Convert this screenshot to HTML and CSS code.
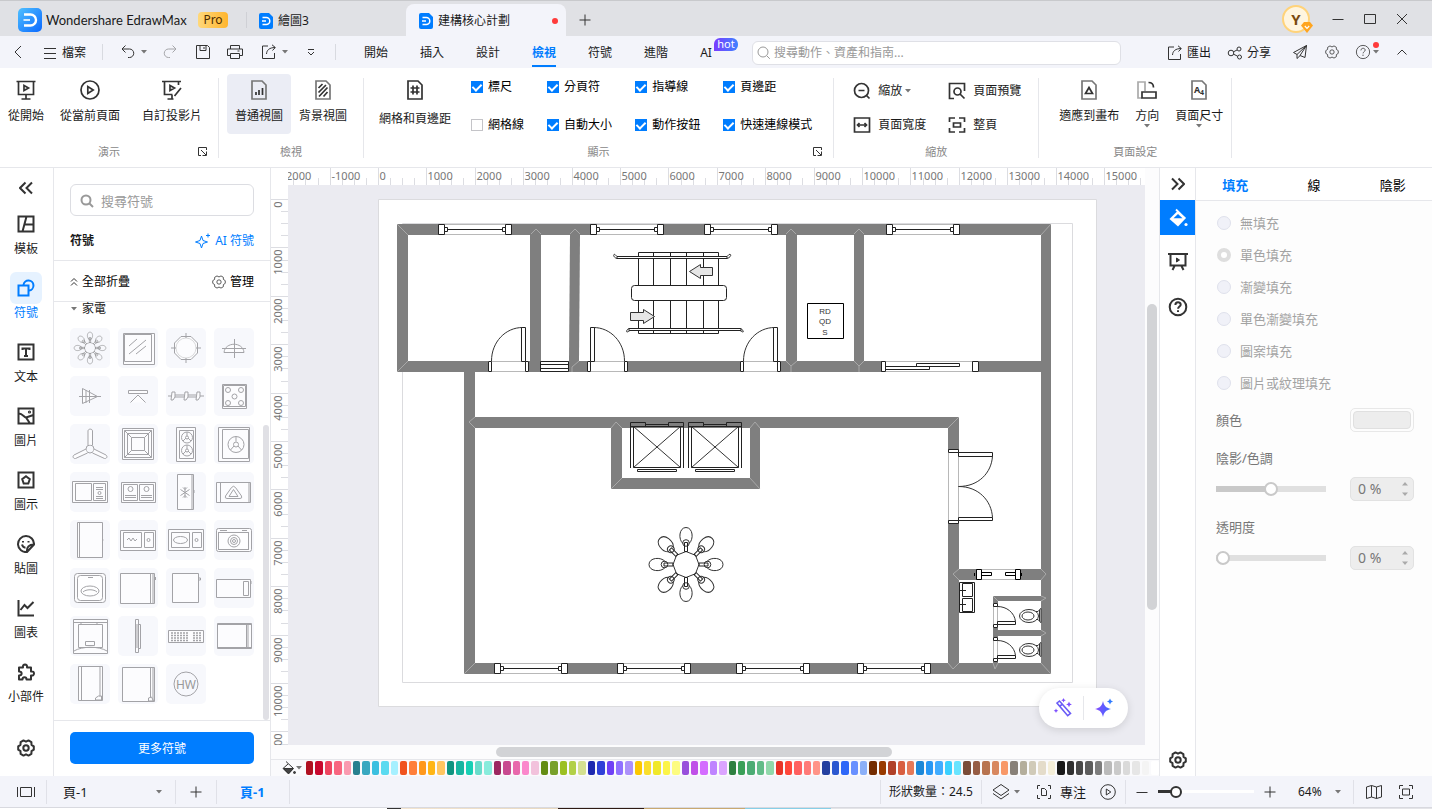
FILE: index.html
```html
<!DOCTYPE html>
<html lang="zh-Hant">
<head>
  <meta charset="UTF-8">
  <meta name="viewport" content="width=device-width, initial-scale=1.0">
  <title>Wondershare EdrawMax</title>
  <link rel="stylesheet" href="styles.css">
</head>
<body>

  <!-- shared icons -->
  <svg class="defs" width="0" height="0" aria-hidden="true">
    <symbol id="i-gear" viewBox="0 0 20 20">
      <path d="M17.8 8.3v3.4l-2.3 1.5-.1 2.7-2.9 1.7-2.5-1.3-2.5 1.3-2.9-1.7-.1-2.7-2.3-1.5V8.3l2.3-1.5.1-2.7 2.9-1.7L10 3.7l2.5-1.3 2.9 1.7.1 2.7z" stroke-linejoin="round"/>
      <circle cx="10" cy="10" r="2.7"/>
    </symbol>
    <symbol id="i-doc" viewBox="0 0 14 16">
      <path d="M2 0h8l4 4v10a2 2 0 0 1-2 2H2a2 2 0 0 1-2-2V2a2 2 0 0 1 2-2z" fill="#007dff" stroke="none"/>
      <path d="M3.5 4.5h3.8a3.5 3.5 0 0 1 0 7H3.5M3 8h4" fill="none" stroke="#fff" stroke-width="1.5"/>
    </symbol>
    <symbol id="i-caret" viewBox="0 0 6 4"><path d="M0 0h6L3 3.6z" fill="#777" stroke="none"/></symbol>
    <symbol id="i-export" viewBox="0 0 16 16">
      <path d="M7 2H1.500v12.500h12V9"/><path d="M5.500 10c.3-4 2.800-6.300 8.500-6.500M11 .8l3.300 2.700L11.500 6.500"/>
    </symbol>
    <symbol id="i-launch" viewBox="0 0 9 9"><path d="M3 8.500H.5v-8h8V3M3 3l5 5M8.500 4.500v4h-4"/></symbol>
    <symbol id="i-help" viewBox="0 0 20 20">
      <circle cx="10" cy="10" r="8.300"/><path d="M7.400 8c0-3.500 5.300-3.500 5.300-.3 0 1.800-2.600 2-2.600 4M10 13.300v1.700"/>
    </symbol>
  </svg>

  <header class="titlebar">
    <div class="brand">
      <svg class="logo" viewBox="0 0 24 24">
        <defs><linearGradient id="lg" x1="0" y1="0" x2="1" y2="1"><stop offset="0" stop-color="#4fc0ff"/><stop offset="1" stop-color="#0a68ff"/></linearGradient></defs>
        <rect width="24" height="24" rx="5" fill="url(#lg)"/>
        <path d="M6 6.500h6.500a5.500 5.500 0 0 1 0 11H6" fill="none" stroke="#fff" stroke-width="2.400"/>
        <path d="M5.500 12H12" stroke="#cfe9ff" stroke-width="2"/>
      </svg>
      <span class="brand-name">Wondershare EdrawMax</span>
      <span class="pro">Pro</span>
    </div>
    <nav class="doc-tabs">
      <a class="doc-tab" href="#"><svg class="doc-icon"><use href="#i-doc"/></svg>繪圖3</a>
      <a class="doc-tab active" href="#"><svg class="doc-icon"><use href="#i-doc"/></svg>建構核心計劃<i class="dot"></i></a>
      <button class="icon-btn" aria-label="新增"><svg viewBox="0 0 12 12" class="s12"><path d="M6 .5v11M.5 6h11"/></svg></button>
    </nav>
    <div class="win-btns">
      <span class="avatar">Y
        <svg class="gem" viewBox="0 0 12 11"><path d="M3 0h6l3 3.500L6 11 0 3.500z" fill="#ffa51f"/><path d="M3.800 4 6 6.300 8.200 4" fill="none" stroke="#fff" stroke-width="1.200"/></svg>
      </span>
      <button class="icon-btn" aria-label="最小化"><svg viewBox="0 0 12 12" class="s12"><path d="M.5 6.500h11"/></svg></button>
      <button class="icon-btn" aria-label="最大化"><svg viewBox="0 0 12 12" class="s12"><path d="M.5 1.500h11v9H.5z"/></svg></button>
      <button class="icon-btn" aria-label="關閉"><svg viewBox="0 0 12 12" class="s12"><path d="m1 1 10 10M11 1 1 11"/></svg></button>
    </div>
  </header>

  <div class="menubar">
    <button class="icon-btn back" aria-label="返回"><svg viewBox="0 0 8 14" class="s14"><path d="M7 1 1 7l6 6"/></svg></button>
    <button class="file-btn"><svg viewBox="0 0 12 12" class="s12"><path d="M0 1.500h12M0 6.500h12M0 11.500h12"/></svg>檔案</button>
    <i class="vsep"></i>
    <div class="quick">
      <button class="icon-btn" aria-label="復原"><svg viewBox="0 0 16 16" class="s16"><path d="M5.500 1.500 2 5l3.500 3.500M2 5h7.500a4 4 0 0 1 0 8.500H8"/></svg><svg class="caret"><use href="#i-caret"/></svg></button>
      <button class="icon-btn faded" aria-label="重做"><svg viewBox="0 0 16 16" class="s16"><path d="M10.500 1.500 14 5l-3.500 3.500M14 5H6.500a4 4 0 0 0 0 8.500H8"/></svg></button>
      <button class="icon-btn" aria-label="儲存"><svg viewBox="0 0 16 16" class="s16"><path d="M1.500 1.500h11l2 2v11h-13zM5 1.500v5h6v-5M9 3v2"/></svg></button>
      <button class="icon-btn" aria-label="列印"><svg viewBox="0 0 16 16" class="s16"><path d="M3.500 5V1.500h9V5M3.500 11.500h-3V5h15v6.500h-3M3.500 9.500h9v5h-9zM10.500 7h2"/></svg></button>
      <button class="icon-btn" aria-label="匯出檔案"><svg class="s16"><use href="#i-export"/></svg><svg class="caret"><use href="#i-caret"/></svg></button>
      <button class="icon-btn" aria-label="更多"><svg viewBox="0 0 8 8" class="s8"><path d="M1 1.500h6M1 4l3 3 3-3"/></svg></button>
    </div>
    <i class="vsep"></i>
    <nav class="tabs">
      <a href="#">開始</a><a href="#">插入</a><a href="#">設計</a><a href="#" class="active">檢視</a><a href="#">符號</a><a href="#">進階</a><a href="#" class="ai">AI<b class="hot">hot</b></a>
    </nav>
    <label class="top-search">
      <svg viewBox="0 0 14 14" class="s14"><circle cx="6" cy="6" r="5"/><path d="m9.800 9.800 3 3"/></svg>
      <input type="text" placeholder="搜尋動作、資產和指南..." aria-label="搜尋動作">
    </label>
    <div class="actions">
      <button class="text-btn"><svg class="s16"><use href="#i-export"/></svg>匯出</button>
      <button class="text-btn"><svg viewBox="0 0 16 16" class="s16"><circle cx="4" cy="8" r="2.800"/><circle cx="12" cy="4" r="2"/><circle cx="12.500" cy="12" r="2"/><path d="M6.500 6.800 10 5M6.600 9.200l4 2"/></svg>分享</button>
      <button class="icon-btn" aria-label="傳送"><svg viewBox="0 0 16 16" class="s16"><path d="M14.500 1.500 1.500 8.500 5 10.500M14.500 1.500 5 10.500v4l3-2.800M14.500 1.500l-1.500 12-5-2z"/></svg></button>
      <button class="icon-btn" aria-label="設定"><svg class="s16"><use href="#i-gear"/></svg></button>
      <button class="icon-btn help" aria-label="說明"><svg class="s16"><use href="#i-help"/></svg><svg class="caret"><use href="#i-caret"/></svg></button>
      <button class="icon-btn" aria-label="收起"><svg viewBox="0 0 10 6" class="s10"><path d="m.5 5.500 4.500-4.500 4.500 4.500"/></svg></button>
    </div>
  </div>

  <section class="ribbon">
    <div class="group g-show">
      <div class="group-body">
        <button class="big"><svg viewBox="0 0 20 20"><path d="M.5 1.500h19M2.500 2v12.500h15V2M10 15v4M5.500 19h9M8 5.500v5l4.500-2.500z"/></svg>從開始</button>
        <button class="big"><svg viewBox="0 0 20 20"><circle cx="10" cy="10" r="9"/><path d="M7.800 6.500v7l5.400-3.500z"/></svg>從當前頁面</button>
        <button class="big custom"><svg viewBox="0 0 20 20"><path d="M0 1.500h19M2.500 2v12.500h8M10 15v4M5.500 19h6M8 5.500v5l4.500-2.500zM16.500 2v3M12.500 16l6.500-8"/></svg>自訂投影片</button>
      </div>
      <div class="group-name">演示</div>
      <svg class="launch"><use href="#i-launch"/></svg>
    </div>
    <i class="gsep"></i>
    <div class="group g-view">
      <div class="group-body">
        <button class="big active"><svg viewBox="0 0 20 20"><path class="soft" d="M3 1h10l4 4v14H3z"/><path d="M7 15v-3M10 15v-5M13.500 15V8"/></svg>普通視圖</button>
        <button class="big"><svg viewBox="0 0 20 20"><path class="soft" d="M3 1h10l4 4v14H3z"/><path d="m5.500 8 4-4M5.500 12.500 13 5M6 16.500l8.500-9M10.500 16.500l4-4.500"/></svg>背景視圖</button>
      </div>
      <div class="group-name">檢視</div>
    </div>
    <i class="gsep"></i>
    <div class="group g-display">
      <div class="group-body">
        <button class="big tall"><svg viewBox="0 0 20 20"><path d="M3 1h10l4 4v14H3zM8 5.500v9M12 5.500v9M5.500 8h9M5.500 12h9"/></svg>網格和頁邊距</button>
        <div class="checks">
          <label><input type="checkbox" checked>標尺</label>
          <label><input type="checkbox" checked>分頁符</label>
          <label><input type="checkbox" checked>指導線</label>
          <label><input type="checkbox" checked>頁邊距</label>
          <label><input type="checkbox">網格線</label>
          <label><input type="checkbox" checked>自動大小</label>
          <label><input type="checkbox" checked>動作按鈕</label>
          <label><input type="checkbox" checked>快速連線模式</label>
        </div>
      </div>
      <div class="group-name">顯示</div>
      <svg class="launch"><use href="#i-launch"/></svg>
    </div>
    <i class="gsep"></i>
    <div class="group g-zoom">
      <div class="zoom-grid">
        <button><svg viewBox="0 0 18 18"><circle cx="8.500" cy="8.500" r="7"/><path d="M5.500 8.500h6M13.500 13.500l3 3"/></svg>縮放<svg class="caret"><use href="#i-caret"/></svg></button>
        <button><svg viewBox="0 0 18 18"><path d="M16.500 9V1.500h-15v15H6"/><circle cx="9.500" cy="9.500" r="3.500"/><path d="m12 12 4.500 4.500"/></svg>頁面預覽</button>
        <button><svg viewBox="0 0 18 18"><path d="M1.500 2h15v14h-15zM4.500 9h9M6.500 7l-2 2 2 2M11.500 7l2 2-2 2"/></svg>頁面寬度</button>
        <button><svg viewBox="0 0 18 18"><path d="M1.500 6V2H7M11 2h5.500v4M16.500 12v4H11M7 16H1.500v-4M5.500 7h7v4h-7z"/></svg>整頁</button>
      </div>
      <div class="group-name">縮放</div>
    </div>
    <i class="gsep"></i>
    <div class="group g-page">
      <div class="group-body">
        <button class="big"><svg viewBox="0 0 20 20"><path class="soft" d="M3 1h10l4 4v14H3z"/><path d="m10 7.500 3.500 6h-7z"/></svg>適應到畫布</button>
        <button class="big"><svg viewBox="0 0 20 20"><path class="pale" d="M5 18H1V2h7v9"/><path d="M5 12h14v6H5zM11.500 2.500c3 0 5 2 5 5"/></svg>方向<svg class="caret"><use href="#i-caret"/></svg></button>
        <button class="big"><svg viewBox="0 0 20 20"><path class="soft" d="M3 1h10l4 4v14H3z"/><text x="5" y="13" class="a4">A</text><text x="11" y="15" class="a4 sub">4</text></svg>頁面尺寸<svg class="caret"><use href="#i-caret"/></svg></button>
      </div>
      <div class="group-name">頁面設定</div>
    </div>
    <i class="gsep"></i>
  </section>

  <main class="work">
    <nav class="rail">
      <button class="collapse" aria-label="收合"><svg viewBox="0 0 14 14" class="s14 thick"><path d="M6.500 1.500 1 7l5.500 5.500M13 1.500 7.500 7l5.500 5.500"/></svg></button>
      <a href="#"><span><svg viewBox="0 0 18 18"><path d="M1.500 1.500h15v15h-15zM9.500 1.500l-4 15M8 9.500h8.500"/></svg></span>模板</a>
      <a href="#" class="active"><span><svg viewBox="0 0 18 18"><path d="M1.500 6.500h10v10h-10z"/><path d="M6.500 6a5 5 0 1 1 5.500 5.500"/></svg></span>符號</a>
      <a href="#"><span><svg viewBox="0 0 18 18"><path d="M1.500 1.500h15v15h-15zM5.500 7V5.500h7V7M9 5.500v7.500M7 13h4"/></svg></span>文本</a>
      <a href="#"><span><svg viewBox="0 0 18 18"><path d="M1.500 1.500h15v15h-15zM1.500 6.500C5 6 7 10 9 10.500l4 6M9 10.500l7.500-2.500"/><circle cx="12.500" cy="5" r=".6"/></svg></span>圖片</a>
      <a href="#"><span><svg viewBox="0 0 18 18"><path d="M1.500 1.500h15v15h-15zM9 5.200l3.800 2.900-1.500 4.400H6.700L5.200 8.100z"/></svg></span>圖示</a>
      <a href="#"><span><svg viewBox="0 0 18 18"><path d="M10 17A8 8 0 1 1 17 9.500zM10 17c-.5-5 2-7.500 7-7.500M5 9.500c.5 2 1.500 3 3.500 3.200"/><path d="M6 6v1.500M11.500 6v1.500"/></svg></span>貼圖</a>
      <a href="#"><span><svg viewBox="0 0 18 18"><path d="M1.500 1v15.500H17M3.500 11l4-5 3 3 6-6"/></svg></span>圖表</a>
      <a href="#"><span><svg viewBox="0 0 18 18"><path d="M2 4.500h4c-1-4 5-4 4 0h4v4c4-1 4 5 0 4v4H9.500c0-3-4-3-4 0H2v-4c3.500 0 3.500-4 0-4z" stroke-linejoin="round"/></svg></span>小部件</a>
      <button class="rail-gear" aria-label="設定"><svg><use href="#i-gear"/></svg></button>
    </nav>

    <aside class="library">
      <div class="lib-top">
        <label class="lib-search">
          <svg viewBox="0 0 14 14" class="s14"><circle cx="6" cy="6" r="4.500"/><path d="m9.500 9.500 3.500 3.500"/></svg>
          <input type="text" placeholder="搜尋符號" aria-label="搜尋符號">
        </label>
        <div class="lib-row"><b>符號</b><a href="#" class="ai-link"><svg viewBox="0 0 16 16" class="s16"><path d="M6.500 3 8 7.500l4.500 1.500L8 10.500 6.500 15 5 10.500.5 9 5 7.500zM13 .5v4M11 2.500h4"/></svg>AI 符號</a></div>
      </div>
      <div class="lib-tools">
        <button><svg viewBox="0 0 8 10" class="s10"><path d="m1 4.500 3-3 3 3M1 8.500l3-3 3 3"/></svg>全部折疊</button>
        <button><svg class="s16"><use href="#i-gear"/></svg>管理</button>
      </div>
      <div class="lib-scroll">
        <button class="cat"><svg class="caret"><use href="#i-caret"/></svg>家電</button>
        <div class="shapes">
          <button><svg class="light"><use href="#lamp" transform="translate(20 20) scale(.43)"/></svg></button>
          <button><svg><path d="M5.500 5.500h31v31h-31zM6.500 6.500h27v27h-27zM11 18l8-7M11 26l17-14M18 26l10-8"/></svg></button>
          <button><svg><circle cx="20" cy="20" r="10"/><path d="M20 5v5M20 30v5M5 20h5M30 20h5M15 8.500h10l6.500 6.500v10L25 31.500H15L8.500 25V15z"/></svg></button>
          <button><svg><path d="M8 20.500h24M20.500 11v19M10 24.500h20c-1-11-19-11-20 0z"/></svg></button>
          <button><svg><path d="M9 20.500h22M12.500 12.500v15l15-7zM16 14v13M19.500 14v13"/></svg></button>
          <button><svg><path d="M10.500 14.500h19v3h-19zM12.500 26.500 20 19l7.500 7.500"/></svg></button>
          <button><svg><path d="M2 20h3M9 19h9M9 21h9M22 19h8M22 21h8M34 20h4M6 16h3v5l-2 3H5zM19 16h3v5l-2 3h-2zM31 16h3v5l-2 3h-2z"/></svg></button>
          <button><svg><path d="M8.500 8.500h24v24h-24zM9.500 9.500h22v21h-22z"/><circle cx="14" cy="14" r="2.500"/><circle cx="27" cy="14" r="2.500"/><circle cx="20.500" cy="20.500" r="2.500"/><circle cx="14" cy="27" r="2.500"/><circle cx="27" cy="27" r="2.500"/></svg></button>
          <button><svg><circle cx="20" cy="25" r="4"/><path d="M18 21V7c0-2.500 4.500-2.500 4.500 0v14M16 25 4 31c-2 1.500-.5 4 1.500 3.500L17.500 29M24 25l12 6c2 1.500.5 4-1.500 3.500L22.500 29"/></svg></button>
          <button><svg><path d="M4.500 4.500h31v31h-31zM6.500 6.500h27v27h-27zM9.500 9.500h21v21h-21zM13.500 13.500h13v13h-13zM6.500 6.500l7 7M33.500 6.500l-7 7M6.500 33.500l7-7M33.500 33.500l-7-7"/></svg></button>
          <button><svg><path d="M10.500 3.500h19v34h-19zM13.500 6.500h14v28h-14z"/><circle cx="21" cy="13.500" r="5.500"/><circle cx="21" cy="26.500" r="5.500"/><circle cx="21" cy="13.500" r="1.500"/><circle cx="21" cy="26.500" r="1.500"/><path d="M21 8v4M17 17l3-3M25 17l-3-3M21 21v4M17 30l3-3M25 30l-3-3"/></svg></button>
          <button><svg><path d="M4.500 3.500h31v34h-31zM8.500 5.500h26v29h-26z"/><circle cx="22" cy="20.500" r="8"/><circle cx="22" cy="20.500" r="2.500"/><path d="M22 12.500v5M16.500 26l3.500-4M27.500 26 24 22"/></svg></button>
          <button><svg><path d="M2.500 9.500h35v21h-35zM5.500 11.500h16v17h-16zM23.500 11.500h12v17h-12zM26 15.500h7M26 17.500h7M26 24.500h7M26 26.500h7"/><circle cx="29.500" cy="21" r="1.500"/></svg></button>
          <button><svg><path d="M3.500 10.500h34v20h-34zM5.500 12.500h14v16h-14zM21.500 12.500h14v16h-14zM7 23.500h11M7 25.500h11M23 23.500h11M23 25.500h11"/><circle cx="12.500" cy="17" r="2.500"/><circle cx="28.500" cy="17" r="2.500"/></svg></button>
          <button><svg><path d="M11.500 2.500h16v35h-16zM26 2.500v35M28 18v3M19 15v11M14.500 17.500l9 6M23.500 17.500l-9 6M17 15.500l2 2 2-2M17 25.500l2-2 2 2"/></svg></button>
          <button><svg><path d="M2.500 10.500h34v20h-34zM6.500 10.500v20M35 11v19M17.500 15.500q2-2.500 4 0l6 8.500q1 2.500-1.500 2.500H13q-2.500 0-1.500-2.500zM19.500 17.500l-4.500 7h9z"/></svg></button>
          <button><svg><path d="M7.500 2.500h25v35h-25zM9.500 2.500v35M32.500 20h1"/></svg></button>
          <button><svg><path d="M2.500 10.500h35v20h-35zM5.500 12.500h18v15h-18zM26.500 12.500h9v15h-9zM9 20l2-2 2 3 2-3 2 3 2-2"/><circle cx="30.500" cy="20" r="1.500"/></svg></button>
          <button><svg><path d="M2.500 9.500h35v21h-35zM5.500 12.500h18v15h-18zM26.500 12.500h9v15h-9z"/><ellipse cx="14.500" cy="20" rx="7" ry="3.500"/><circle cx="30.500" cy="20" r="1.500"/></svg></button>
          <button><svg><rect x="2.500" y="8.500" width="35" height="23" rx="2"/><rect x="4.500" y="12.500" width="30" height="17"/><circle cx="20" cy="21" r="6"/><circle cx="20" cy="21" r="3.500"/><circle cx="20" cy="21" r="1.500"/><path d="M6 10.500h7M28 10.500h5"/></svg></button>
          <button><svg><rect x="4.500" y="5.500" width="31" height="29" rx="3"/><rect x="7.500" y="7.500" width="25" height="25" rx="3"/><ellipse cx="20" cy="23" rx="9" ry="5"/><path d="M18 9.500h5M13 24c3-3 11-3 14 0"/></svg></button>
          <button><svg><path d="M2.500 5.500h34v30h-34zM32.500 5.500v30M35 6v29M37.500 9v3"/></svg></button>
          <button><svg><path d="M6.500 5.500h26v29h-26zM33 10h1.500v2H33"/></svg></button>
          <button><svg><path d="M2.500 11.500h34v18h-34zM29.500 13.500h5v14h-5zM37 13v3"/></svg></button>
          <button><svg><path d="M3.500 3.500h34v34h-34zM3.500 6.500h34M8.500 8.500h24v23h-24zM15.500 25.500h9v4h-9zM4 35c8-5 25-5 33 0M11 6.500v2M27 6.500v2"/></svg></button>
          <button><svg><path d="M17.500 3.500h3v33h-3zM20.500 8.500h2v24h-2zM19 8v24"/></svg></button>
          <button><svg><path d="M2.500 14.500h35v12h-35z"/><path d="M5 17h17M5 19.500h17M5 22h17M5 24.500h17M27 17h8M27 19.500h8M27 22h8M27 24.500h8" stroke-dasharray="2 1" stroke-width="1.500"/></svg></button>
          <button><svg><path d="M3.500 7.500h34v25h-34zM32.500 7.500v25M34 8v24M3 8.500h35M3 31.500h35"/></svg></button>
          <button><svg><path d="M8.500 2.500h24v34h-24zM11.500 2.500v34M30 2.500v30M25.500 36v-2l3-2h3v4z"/></svg></button>
          <button><svg><path d="M4.500 3.500h32v34h-32zM32.500 3.500v30M35 4v33M30.500 37v-3l3-1 2 4z"/></svg></button>
          <button><svg><circle cx="20" cy="20" r="12"/><text x="20" y="25" class="hw">HW</text></svg></button>
        </div>
        <i class="lib-thumb"></i>
      </div>
      <div class="lib-foot"><button>更多符號</button></div>
    </aside>

    <section class="stage">
      <svg class="ruler-h" id="rulerH"></svg>
      <svg class="ruler-v" id="rulerV"></svg>
      <div class="canvas">
        <svg class="plan" viewBox="288 185 857 560" preserveAspectRatio="xMinYMin meet">
          <defs>
            <g id="win">
              <path class="gap" d="M3 0h68v11H3z"/><path class="edge" d="M6 .5h62M6 10.500h62"/>
              <path class="ln" d="M.5.500h6v10h-6zM67.500.500h6v10h-6zM6.500 3.500h3v4h-3zM64.500 3.500h3v4h-3zM9.500 5.500h55"/>
            </g>
            <g id="door">
              <path class="gap" d="M0 0h41v11H0z"/><path class="edge" d="M3 .5h34M3 10.500h34"/>
              <path class="ln" d="M.5.500h3v10h-3zM37.500.500h3v10h-3zM33.500-33.500h4v34h-4z"/><path class="arc" d="M3.500 0c0-19 14-33.500 31-33.500"/>
            </g>
            <g id="lift">
              <path class="ln" d="M.5 1v45M53.500 1v45M3.500 4.500h47v41h-47zM.5.500h15v4H.5zM38.500.500h15v4h-15zM15 2.500h23M7.500 47.500h39v2h-39z"/>
              <path class="arc" d="m3.500 4.500 47 41M50.500 4.500l-47 41"/>
            </g>
            <g id="chair">
              <path class="arc" d="M-3-21c-5-4-4-16 3-16s8 12 3 16"/><circle class="arc" cy="-21.500" r="3.300"/><path class="ln" d="M-1.500-22h3v9h-3z"/>
            </g>
            <g id="lamp">
              <path class="arc" d="m0-13 9.500 3.800L13 0l-3.500 9.200L0 13l-9.500-3.800L-13 0l3.500-9.200z"/>
              <use href="#chair"/><use href="#chair" transform="rotate(45)"/><use href="#chair" transform="rotate(90)"/><use href="#chair" transform="rotate(135)"/>
              <use href="#chair" transform="rotate(180)"/><use href="#chair" transform="rotate(225)"/><use href="#chair" transform="rotate(270)"/><use href="#chair" transform="rotate(315)"/>
            </g>
            <g id="stall">
              <path class="gap" d="M0 0h5v25H0z"/><path class="edge" d="M.5 3v18M4.500 3v18"/>
              <path class="ln" d="M.5.500h4v3h-4zM.5 21.500h4v3h-4zM4.500 18.500h18v3h-18z"/><path class="arc" d="M4.500 3.500c9 0 17 6 18 15"/>
              <ellipse class="arc" cx="36" cy="13" rx="9.500" ry="6.500"/><ellipse class="arc" cx="35" cy="13" rx="6" ry="4"/>
              <path class="arc" d="M43 8.500h2c2-2 2-3 3-3v14c-1 0-1-1-3-3h-2M46.500 7v11"/>
            </g>
          </defs>
          <path class="sheet" d="M378.500 199.500h718v507h-718z"/>
          <path class="sheet" d="M402.500 223.500h670v459h-670z"/>
          <!-- walls -->
          <g class="wall">
            <path d="M397 224h654v11H397zM397 224h11v148h-11zM397 361h654v11H397zM1041 224h10v450h-10z"/>
            <path d="M530 235h11v126h-11zM786 235h11v126h-11zM854 235h10v126h-10z"/>
            <path d="M464 361h11v313h-11zM464 417h495v11H464zM948 417h11v257h-11zM464 663h587v11H464z"/>
            <path d="M611 428h11v61h-11zM750 428h10v61h-10zM611 478h149v11H611z"/>
            <path d="M959 569h82v11h-82zM993 596h48v5h-48zM993 630h48v6h-48zM993 596h5v67h-5z"/>
          </g>
          <path class="wall slant" d="M570 235h10l-1 126h-10z"/>
          <path class="joint" d="m397 224 11 11M397 372l11-11M1051 224l-10 11M464 674l11-11M1051 674l-10-11M531 234l5-5 5 5M570 234l5-5 5 5M786 234l5-5 5 5M854 234l5-5 5 5M786 361l5 5v6M797 361l-6 5M854 361l5 5v6M864 361l-5 5M579 361l-7 6v5M475 417l-6 5 6 6M611 428l5-6 6 6M750 428l5-6 5 6M611 489l11-11M760 489l-10-11M959 417l-11 11M959 569l-6 5 6 6M1041 569l5 5-5 6M948 663l5 6 6-6M993 596l5 5M1041 596l5 2-5 3M1041 630l5 3-5 3M993 663l2 6 3-6"/>
          <use href="#win" x="438" y="224"/><use href="#win" x="590" y="224"/><use href="#win" x="704" y="224"/><use href="#win" x="886" y="224"/>
          <use href="#win" x="494" y="663"/><use href="#win" x="617" y="663"/><use href="#win" x="736" y="663"/><use href="#win" x="857" y="663"/>
          <use href="#door" x="488" y="361"/><use href="#door" transform="translate(628 361) scale(-1 1)"/><use href="#door" x="740" y="361"/>
          <!-- vent and sliding door -->
          <path class="ln box" d="M540.500 361.500h28v10h-28zM540.500 364.500h28M540.500 368.500h28"/>
          <path class="gap" d="M882 361h97v11h-97z"/><path class="edge" d="M886 361.500h87M886 371.500h87"/>
          <path class="ln" d="M881.500 361.500h4v10h-4zM972.500 361.500h6v10h-6zM885.500 366.500h44v3h-44zM916.500 363.500h43v3h-43z"/>
          <!-- escalator -->
          <path class="ln" d="M638.500 252.500h80v81h-80zM653.500 252v82M670.500 252v82M686.500 252v82M703.500 252v82"/>
          <rect class="ln box" x="631.500" y="285.500" width="95" height="15" rx="3"/>
          <path class="ln box" d="M617 256.500h110v2H617zM629 328.500h112v2H629z"/>
          <path class="arc" d="M617 258.500c-4-1-4-5-2-4l2 2M727 258.500c4-1 5-5 2-4l-2 2M629 328.500c-3 1-3 5-1 3l2-1M740 328.500c4 1 4 5 2 3l-2-1"/>
          <path class="arrow" d="m689.500 271.500 11-7v3h12v8h-12v3zM654.500 316.500l-11-7v3h-13v8h13v3z"/>
          <!-- cabinet -->
          <path class="ln box dark" d="M807.500 303.500h36v35h-36z"/>
          <text class="cab" x="825" y="314">RD</text><text class="cab" x="825" y="324">QD</text><text class="cab" x="825" y="335">S</text>
          <use href="#lift" x="630" y="422"/><use href="#lift" x="688" y="422"/>
          <use href="#lamp" transform="translate(686 564.500)"/>
          <!-- double door -->
          <path class="gap" d="M948 450h11v73h-11z"/><path class="edge" d="M948.500 453v68M958.500 453v68"/>
          <path class="ln box" d="M948.500 449.500h10v3h-10zM948.500 520.500h10v3h-10zM958.500 452.500h34v4h-34zM958.500 517.500h34v3h-34z"/>
          <path class="arc" d="M992.500 456c-1 17-14 30.500-34 30.500 20 0 33 14 34 31"/>
          <!-- washroom -->
          <path class="gap" d="M977 569h44v11h-44z"/><path class="edge" d="M981 569.500h35M981 579.500h35"/>
          <path class="ln dark" d="M976.500 569.500h5v10h-5zM1015.500 569.500h5v10h-5zM981.500 572.500h10v3h-10zM1005.500 572.500h10v3h-10zM974.500 573v3M1021.500 573v3"/>
          <path class="ln" d="M959.500 582.500h15v30h-15zM962.500 583.500h10v13h-10zM962.500 598.500h10v13h-10zM960 590.500h6M960 604.500h6M962.500 588v4M962.500 602v4"/>
          <use href="#stall" x="993" y="603"/><use href="#stall" x="993" y="637"/>
        </svg>
        <div class="float">
          <button aria-label="魔棒"><svg viewBox="0 0 20 20" class="s20"><path d="m4 5 2.500-2 11 12.500-2.800 2.200zM7 8l2.800-2.200" fill="none" stroke="#6a5cf6" stroke-width="1.600"/><path d="M10.500 0l.7 1.600 1.600.7-1.600.7-.7 1.600-.7-1.600-1.600-.7 1.600-.7zM3 10.500l.7 1.600 1.600.7-1.600.7L3 15.100l-.7-1.600-1.600-.7 1.600-.7zM16 3.500l.9 2 2 .9-2 .9-.9 2-.9-2-2-.9 2-.9z" fill="#7c4dff"/></svg></button>
          <i></i>
          <button aria-label="AI"><svg viewBox="0 0 20 20" class="s20"><defs><linearGradient id="sp"><stop offset="0" stop-color="#8a4bff"/><stop offset="1" stop-color="#3a6bff"/></linearGradient></defs><path d="M9 3c1.200 5 2.500 6.500 8 8-5.500 1.500-6.800 3-8 8-1.200-5-2.500-6.500-8-8 5.500-1.500 6.800-3 8-8z" fill="url(#sp)"/><path d="M16 .5l1 2 2 1-2 1-1 2-1-2-2-1 2-1z" fill="#2f7bff"/></svg></button>
        </div>
      </div>
      <div class="vscroll"><i></i></div>
      <div class="hscroll"><i></i></div>
      <div class="palette">
        <button class="bucket" aria-label="填充色"><svg viewBox="0 0 14 14" class="s14"><path d="m4 .5 7.500 7-5 5.500L1 7.500 6 3" fill="none"/><path d="M1.500 7.500h9.500l-4.500 5z" fill="#444"/><circle cx="12.500" cy="11.500" r="1" fill="#444"/></svg><svg class="caret"><use href="#i-caret"/></svg></button>
        <div class="swatches" id="swatches"></div>
      </div>
    </section>

    <nav class="side">
      <button aria-label="收合面板"><svg viewBox="0 0 14 14" class="s14 thick"><path d="M1 1.500 6.500 7 1 12.500M7.500 1.500 13 7l-5.500 5.500"/></svg></button>
      <button class="active" aria-label="填充"><svg viewBox="0 0 20 20" class="s20"><path d="m8 1.500 9 9" stroke="#fff" stroke-width="1.800"/><path d="M9.500 3 1.500 11l8.500 7.500 8-8.500z" fill="#fff" stroke="none"/><path d="M10 6 5.500 10.300h9z" fill="#007dff" stroke="none"/><circle cx="18" cy="16.500" r="1.600" fill="#fff" stroke="none"/></svg></button>
      <button aria-label="簡報"><svg viewBox="0 0 20 20" class="s20 thick"><path d="M0 2h20M2.500 2v11.500h15V2M6.500 14l-2 4M13.500 14l2 4"/><path d="M8.500 6v4l3-2z" fill="#333" stroke-width="1"/></svg></button>
      <button aria-label="說明"><svg class="s20 thick"><use href="#i-help"/></svg></button>
      <button class="last" aria-label="設定"><svg class="s20 thick"><use href="#i-gear"/></svg></button>
    </nav>

    <aside class="props">
      <nav class="prop-tabs"><a href="#" class="active">填充</a><a href="#">線</a><a href="#">陰影</a></nav>
      <form>
        <fieldset disabled>
          <label><input type="radio" name="fill">無填充</label>
          <label><input type="radio" name="fill" checked>單色填充</label>
          <label><input type="radio" name="fill">漸變填充</label>
          <label><input type="radio" name="fill">單色漸變填充</label>
          <label><input type="radio" name="fill">圖案填充</label>
          <label><input type="radio" name="fill">圖片或紋理填充</label>
        </fieldset>
        <div class="prop-row"><span>顏色</span><button type="button" class="color-btn" aria-label="顏色" disabled><i></i></button></div>
        <label class="prop-name" for="tint">陰影/色調</label>
        <div class="prop-row">
          <input type="range" id="tint" class="half" min="0" max="100" value="50" disabled>
          <span class="spin"><input type="text" value="0 %" aria-label="色調值" disabled><svg viewBox="0 0 6 16"><path d="M0 4.500 3 1l3 3.500zM0 11.500 3 15l3-3.500z"/></svg></span>
        </div>
        <label class="prop-name" for="alpha">透明度</label>
        <div class="prop-row">
          <input type="range" id="alpha" min="0" max="100" value="0" disabled>
          <span class="spin"><input type="text" value="0 %" aria-label="透明度值" disabled><svg viewBox="0 0 6 16"><path d="M0 4.500 3 1l3 3.500zM0 11.500 3 15l3-3.500z"/></svg></span>
        </div>
      </form>
    </aside>
  </main>

  <footer class="status">
    <button class="icon-btn outline" aria-label="頁面列表"><svg viewBox="0 0 18 12" class="s18"><path d="M.5 1v10M17.500 1v10M3.500 1.500h11v9h-11z"/></svg></button>
    <i class="vsep"></i>
    <span class="page-pick"><select aria-label="頁面"><option>頁-1</option></select><svg class="caret"><use href="#i-caret"/></svg></span>
    <i class="vsep"></i>
    <button class="icon-btn add" aria-label="新增頁面"><svg viewBox="0 0 12 12" class="s12"><path d="M6 .5v11M.5 6h11"/></svg></button>
    <i class="vsep"></i>
    <a href="#" class="page-tab">頁-1</a>
    <i class="vsep"></i>
    <span class="grow"></span>
    <i class="vsep"></i>
    <span class="count">形狀數量：24.5</span>
    <i class="vsep"></i>
    <button class="icon-btn layers" aria-label="圖層"><svg viewBox="0 0 18 18" class="s18"><path d="m9 1.500 8 5.500-8 5.500L1 7zM1 10.500 9 16l8-5.500"/></svg><svg class="caret"><use href="#i-caret"/></svg></button>
    <button class="focus-btn"><svg viewBox="0 0 16 16" class="s16"><path d="M1.500 5V1.500H4M12 1.500h2.500V5M14.500 11v3.500H12M4 14.500H1.500V11M5.500 4.500h3l2 2v5h-5z"/></svg>專注</button>
    <button class="icon-btn play" aria-label="播放"><svg viewBox="0 0 16 16" class="s16"><circle cx="8" cy="8" r="7.300"/><path d="M6.300 5v6l4.500-3z"/></svg></button>
    <i class="vsep"></i>
    <button class="icon-btn" aria-label="縮小"><svg viewBox="0 0 12 12" class="s12"><path d="M.5 6.500h11"/></svg></button>
    <input type="range" class="zoom" min="0" max="100" value="14" aria-label="縮放">
    <button class="icon-btn" aria-label="放大"><svg viewBox="0 0 12 12" class="s12"><path d="M6 .5v11M.5 6h11"/></svg></button>
    <span class="zoom-pick"><select aria-label="縮放比例"><option>64%</option></select><svg class="caret"><use href="#i-caret"/></svg></span>
    <i class="vsep"></i>
    <button class="icon-btn nav-map" aria-label="導覽"><svg viewBox="0 0 16 16" class="s16"><path d="m.5 3 5-1.500 5 1.500 5-1.500V13l-5 1.500-5-1.500-5 1.500zM5.500 1.500V13M10.500 3v11.500"/></svg></button>
    <button class="icon-btn fit" aria-label="符合視窗"><svg viewBox="0 0 16 16" class="s16"><path d="M1.500 5V1.500H5M11 1.500h3.500V5M14.500 11v3.500H11M5 14.500H1.500V11M4.500 5h7v6h-7z"/></svg></button>
  </footer>
  <div class="under"></div>

  <script src="script.js"></script>
</body>
</html>
```

FILE: styles.css
```css
* {
  box-sizing: border-box;
}
body, html {
  margin: 0;
  padding: 0;
}
body {
  display: flex;
  flex-direction: column;
  height: 100vh;
  overflow: hidden;
  font-family: "Noto Sans", "Noto Sans CJK TC", sans-serif;
  font-size: 12px;
  line-height: 16px;
  color: #1a1a1a;
  background-color: #fff;
}
a {
  color: inherit;
  text-decoration: none;
}
button, input, select {
  font: inherit;
  color: inherit;
  border: none;
  background: none;
  padding: 0;
  margin: 0;
  outline: none;
}
button {
  white-space: nowrap;
}
svg {
  flex: none;
  fill: none;
  stroke: #333;
}
.defs {
  position: absolute;
}
.s8 { width: 8px; height: 8px; }
.s10 { width: 10px; height: 10px; }
.s12 { width: 12px; height: 12px; }
.s14 { width: 14px; height: 14px; }
.s16 { width: 16px; height: 16px; }
.s18 { width: 18px; height: 18px; }
.s20 { width: 20px; height: 20px; }
.thick { stroke-width: 2; }
.caret {
  width: 6px;
  height: 4px;
}
.vsep {
  width: 1px;
  height: 16px;
  background-color: #d8dae0;
}
.icon-btn {
  display: flex;
  align-items: center;
  justify-content: center;
  width: 32px;
  height: 24px;
}

/* title bar */
.titlebar {
  display: flex;
  flex: none;
  height: 36px;
  border-top: 1px solid #c8c9cc;
  background-color: #e0e1e5;
}
.brand {
  display: flex;
  align-items: center;
  padding-left: 18px;
  padding-top: 3px;
  width: 246px;
}
.logo {
  width: 24px;
  height: 24px;
  stroke: none;
}
.brand-name {
  margin-left: 4px;
  font-family: Lato, "Noto Sans", sans-serif;
  font-size: 13px;
  white-space: nowrap;
}
.pro {
  width: 30px;
  margin-left: auto;
  margin-right: 18px;
  border-radius: 4px;
  text-align: center;
  color: #4d2c00;
  background: linear-gradient(90deg, #ffd87a, #ffb52e);
}
.doc-tabs {
  display: flex;
  flex: 1;
  align-items: flex-end;
}
.doc-tab {
  display: flex;
  align-items: center;
  gap: 5px;
  width: 160px;
  height: 32px;
  padding: 1px 8px 0 13px;
}
.doc-tab:first-child {
  background: linear-gradient(#cfd0d5, #cfd0d5) left / 1px 16px no-repeat;
}
.doc-tab.active {
  border-radius: 8px 8px 0 0;
  background-color: #f3f4fa;
}
.doc-icon {
  width: 14px;
  height: 16px;
}
.dot {
  width: 6px;
  height: 6px;
  margin-left: auto;
  border-radius: 50%;
  background-color: #ff3b3b;
}
.doc-tabs .icon-btn {
  width: 38px;
  height: 32px;
}
.win-btns {
  display: flex;
  align-items: center;
  padding-right: 14px;
}
.avatar {
  position: relative;
  width: 28px;
  height: 28px;
  margin-right: 12px;
  border: 2px solid #ffd37a;
  border-radius: 50%;
  background-color: #fff5df;
  text-align: center;
  line-height: 24px;
  font-size: 15px;
  font-weight: bold;
  color: #7a4a10;
}
.gem {
  position: absolute;
  right: -5px;
  bottom: -2px;
  width: 12px;
  height: 11px;
  stroke: none;
}

/* menu bar */
.menubar {
  display: flex;
  flex: none;
  align-items: center;
  height: 32px;
  background-color: #f3f4fa;
}
.back {
  width: 36px;
}
.file-btn {
  display: flex;
  align-items: center;
  gap: 6px;
  padding: 1px 16px 0 8px;
}
.quick {
  display: flex;
  padding: 0 10px 0 7px;
}
.quick .icon-btn {
  gap: 5px;
}
.quick .icon-btn:nth-child(odd) {
  width: 46px;
}
.quick .icon-btn:nth-child(3) {
  width: 33px;
}
.quick .icon-btn:nth-child(2) {
  margin-left: -2px;
}
.quick .icon-btn:nth-child(6) {
  width: 28px;
}
.faded {
  opacity: .4;
}
.tabs {
  display: flex;
  padding-left: 12px;
}
.tabs a {
  position: relative;
  width: 56px;
  padding: 9px 0 7px;
  text-align: center;
}
.tabs a.active {
  color: #007dff;
  font-weight: bold;
}
.tabs a.active::after {
  content: "";
  position: absolute;
  left: 16px;
  right: 16px;
  bottom: 1px;
  height: 2px;
  background-color: #007dff;
}
.tabs a.ai {
  width: 68px;
  padding-right: 24px;
}
.hot {
  position: absolute;
  left: 30px;
  top: 2px;
  width: 24px;
  height: 13px;
  border-radius: 6px 6px 6px 0;
  background: linear-gradient(90deg, #7a3cff, #3f83ff);
  color: #fff;
  font-size: 11px;
  font-weight: normal;
  line-height: 12px;
}
.top-search {
  display: flex;
  flex: 1;
  align-items: center;
  gap: 3px;
  height: 24px;
  margin-top: 2px;
  padding: 0 5px 0 4px;
  border: 1px solid #dfe0e6;
  border-radius: 6px;
  background-color: #fff;
}
.top-search svg, .lib-search svg {
  stroke: #999;
}
.top-search input, .lib-search input {
  flex: 1;
  min-width: 0;
}
::placeholder {
  color: #999;
  opacity: 1;
}
.actions {
  display: flex;
  padding: 0 14px 0 39px;
}
.text-btn {
  display: flex;
  align-items: center;
  gap: 4px;
  width: 60px;
  padding: 1px 0 0 7px;
}
.text-btn:nth-child(2) {
  width: 64px;
}
.help {
  position: relative;
  width: 38px;
  gap: 2px;
}
.help::after {
  content: "";
  position: absolute;
  right: 7px;
  top: 2px;
  width: 6px;
  height: 6px;
  border-radius: 50%;
  background-color: #ff3b3b;
}

/* ribbon */
.ribbon {
  display: flex;
  flex: none;
  align-items: center;
  height: 100px;
  border-bottom: 1px solid #e6e7eb;
}
.gsep {
  width: 1px;
  height: 80px;
  background-color: #e6e7eb;
}
.group {
  position: relative;
  display: flex;
  flex-direction: column;
  height: 100px;
  padding-top: 6px;
}
.group-body {
  display: flex;
  height: 70px;
}
.group-name {
  text-align: center;
  font-size: 11px;
  color: #888;
}
.launch {
  position: absolute;
  right: 11px;
  bottom: 12px;
  width: 9px;
  height: 9px;
}
.big {
  display: flex;
  flex-direction: column;
  align-items: center;
  height: 60px;
  padding: 6px 8px 0;
  border-radius: 4px;
}
.big > svg:first-child {
  width: 20px;
  height: 20px;
  margin-bottom: 8px;
  stroke-width: 1.7;
}
.big.active {
  background-color: #ebedf5;
}
.big.tall > svg:first-child {
  margin-bottom: 11px;
}
.big.custom {
  margin-left: 6px;
}
.soft {
  stroke: #777;
}
.pale {
  stroke: #aaa;
}
.a4 {
  fill: #333;
  stroke: none;
  font-size: 9px;
  font-weight: bold;
}
.a4.sub {
  font-size: 7px;
}
.g-show .group-body { padding-right: 8px; }
.g-view .group-body { padding: 0 8px; }
.g-display .group-body { padding: 0 21px 0 7px; }
.g-page .group-body { padding-left: 12px; }
.checks {
  display: grid;
  grid-template-columns: repeat(4, auto);
  grid-auto-rows: 16px;
  gap: 22px 23px;
  padding: 5px 0 0 12px;
}
.checks label {
  display: flex;
  align-items: center;
  gap: 5px;
  color: #000;
}
input[type="checkbox"] {
  appearance: none;
  width: 12px;
  height: 12px;
  border: 1px solid #c4c4c8;
  background-color: #fff;
}
input[type="checkbox"]:checked {
  display: flex;
  justify-content: center;
  border-color: #007dff;
  background-color: #007dff;
}
input[type="checkbox"]:checked::after {
  content: "";
  width: 4px;
  height: 7px;
  border: solid #fff;
  border-width: 0 2px 2px 0;
  transform: rotate(45deg);
}
.zoom-grid {
  display: grid;
  grid-template-columns: auto auto;
  grid-auto-rows: 16px;
  gap: 18px 22px;
  height: 70px;
  padding: 9px 17px 0 19px;
}
.zoom-grid button {
  display: flex;
  align-items: center;
}
.zoom-grid svg:first-child {
  width: 18px;
  height: 18px;
  margin-right: 7px;
  stroke-width: 1.7;
}
.zoom-grid .caret {
  margin-left: 3px;
}

/* work area */
.work {
  display: flex;
  flex: 1;
  min-height: 0;
}
.rail {
  display: flex;
  flex-direction: column;
  align-items: center;
  gap: 15px;
  width: 54px;
  padding-right: 1px;
  border-right: 1px solid #e6e7eb;
}
.rail svg {
  stroke-width: 2;
}
.collapse {
  display: flex;
  align-items: center;
  height: 40px;
  margin-bottom: -15px;
}
.rail a {
  display: flex;
  flex-direction: column;
  align-items: center;
}
.rail a span {
  display: flex;
  align-items: center;
  justify-content: center;
  width: 32px;
  height: 32px;
  margin-bottom: 1px;
  border-radius: 6px;
}
.rail a svg {
  width: 18px;
  height: 18px;
}
.rail a.active {
  color: #007dff;
}
.rail a.active span {
  background-color: #e6f2ff;
}
.rail a.active svg {
  stroke: #007dff;
}
.rail-gear {
  display: flex;
  margin-top: auto;
  padding-bottom: 18px;
}
.rail-gear svg {
  width: 20px;
  height: 20px;
}
.library {
  display: flex;
  flex-direction: column;
  width: 217px;
  border-right: 1px solid #e6e7eb;
}
.lib-top {
  padding: 16px 16px 0;
  height: 93px;
  border-bottom: 1px solid #e6e7eb;
}
.lib-search {
  display: flex;
  align-items: center;
  gap: 7px;
  height: 32px;
  padding: 1px 9px 0;
  border: 1px solid #dcdde2;
  border-radius: 6px;
  font-size: 13px;
}
.lib-search svg {
  stroke-width: 2;
}
.lib-row {
  display: flex;
  align-items: center;
  justify-content: space-between;
  margin-top: 17px;
}
.ai-link {
  display: flex;
  gap: 4px;
  color: #007dff;
}
.ai-link svg {
  stroke: #007dff;
}
.lib-tools {
  display: flex;
  align-items: center;
  justify-content: space-between;
  height: 41px;
  padding: 2px 16px 0 15px;
  border-bottom: 1px solid #e6e7eb;
}
.lib-tools button {
  display: flex;
  align-items: center;
  gap: 3px;
  color: #000;
}
.lib-scroll {
  position: relative;
  flex: 1;
  min-height: 0;
  padding: 0 16px;
  overflow: hidden;
}
.cat {
  display: flex;
  align-items: center;
  gap: 5px;
  height: 14px;
  margin-bottom: 12px;
  padding-left: 1px;
}
.shapes {
  display: grid;
  grid-template-columns: repeat(4, 40px);
  gap: 8px;
}
.shapes button {
  height: 40px;
  border-radius: 5px;
  background-color: #f7f8fc;
}
.shapes svg {
  display: block;
  width: 40px;
  height: 40px;
  stroke: #a3a3a7;
  fill: none;
}
.shapes svg path, .shapes svg rect {
  fill: #fff;
  fill-opacity: .6;
}
.light {
  opacity: .7;
}
.hw {
  fill: #999;
  stroke: none;
  font-size: 12px;
  text-anchor: middle;
}
.lib-thumb {
  position: absolute;
  right: 1px;
  top: 123px;
  bottom: 0;
  width: 6px;
  border-radius: 3px;
  background-color: #e0e0e5;
}
.lib-foot {
  padding: 11px 16px 12px;
  border-top: 1px solid #e6e7eb;
}
.lib-foot button {
  width: 100%;
  height: 32px;
  padding-top: 1px;
  border-radius: 5px;
  background-color: #007dff;
  color: #fff;
}

/* canvas with rulers */
.stage {
  display: grid;
  flex: 1;
  min-width: 0;
  grid-template-columns: 17px 1fr 14px;
  grid-template-rows: 17px 1fr 14px 17px;
}
.ruler-h {
  grid-column: 2;
  grid-row: 1;
  width: 100%;
  height: 17px;
}
.ruler-v {
  grid-column: 1;
  grid-row: 1 / 3;
  width: 17px;
  height: 100%;
}
.ruler-h path, .ruler-v path {
  stroke: #dcdde2;
}
.ruler-h text, .ruler-v text {
  fill: #777;
  stroke: none;
  font-size: 11px;
}
.canvas {
  grid-column: 2;
  grid-row: 2;
  position: relative;
  min-height: 0;
  overflow: hidden;
  background-color: #ebebf1;
}
.plan {
  display: block;
  width: 100%;
  height: 100%;
}
.sheet {
  fill: #fff;
  stroke: #dbdbde;
}
.wall {
  fill: #7f7f7f;
  stroke: none;
  shape-rendering: crispEdges;
}
.wall.slant {
  shape-rendering: auto;
}
.joint {
  stroke: #a8a8a8;
}
.gap {
  fill: #fff;
  stroke: none;
}
.edge {
  stroke: #b8b8b8;
}
.plan .ln {
  stroke: #222;
}
.plan #win .ln, .plan #door .ln, .plan .box {
  fill: #fff;
}
.plan .dark {
  stroke: #000;
}
.plan .arc {
  stroke: #333;
}
.arrow {
  fill: #e6e6e6;
  stroke: #333;
}
.cab {
  fill: #333;
  stroke: none;
  font-family: "Liberation Sans", sans-serif;
  font-size: 8px;
  text-anchor: middle;
}
.float {
  position: absolute;
  right: 17px;
  bottom: 17px;
  display: flex;
  align-items: center;
  justify-content: center;
  gap: 10px;
  width: 89px;
  height: 40px;
  border-radius: 20px;
  background-color: #fff;
  box-shadow: 0 2px 8px rgba(0, 0, 0, .12);
}
.float button {
  display: flex;
}
.float svg {
  stroke: none;
}
.float i {
  width: 1px;
  height: 24px;
  background-color: #e6e7eb;
}
.vscroll {
  grid-column: 3;
  grid-row: 1 / 3;
  display: flex;
  justify-content: center;
  padding-top: 136px;
  background-color: #fcfcfd;
}
.vscroll i {
  width: 10px;
  height: 306px;
  border-radius: 5px;
  background-color: #d2d3d6;
}
.hscroll {
  grid-column: 1 / 4;
  grid-row: 3;
  padding: 2px 0 0 225px;
  background-color: #fcfcfd;
}
.hscroll i {
  display: block;
  width: 396px;
  height: 10px;
  border-radius: 5px;
  background-color: #d2d3d6;
}
.palette {
  grid-column: 1 / 4;
  grid-row: 4;
  display: flex;
  align-items: center;
  border-top: 1px solid #e6e7eb;
  background-color: #fafafc;
}
.bucket {
  display: flex;
  align-items: center;
  width: 35px;
  padding-left: 11px;
}
.swatches {
  display: flex;
  flex: 1;
  gap: 2px;
}
.swatches i {
  flex: 1;
  height: 14px;
  border-radius: 2px;
}

/* right side */
.side {
  display: flex;
  flex-direction: column;
  width: 37px;
  border: solid #e6e7eb;
  border-width: 0 1px;
}
.side button {
  display: flex;
  align-items: center;
  justify-content: center;
  height: 45px;
}
.side button:first-child {
  height: 32px;
}
.side button.active {
  height: 35px;
  margin-bottom: 4px;
  background-color: #007dff;
}
.side button.last {
  height: 32px;
  margin-top: auto;
}
.props {
  width: 236px;
  background-color: #fdfdfd;
  font-size: 13px;
  color: #777;
}
.prop-tabs {
  display: flex;
  height: 33px;
  border-bottom: 1px solid #e6e7eb;
  background-color: #fff;
}
.prop-tabs a {
  flex: 1;
  padding-top: 9px;
  text-align: center;
  color: #000;
}
.prop-tabs .active {
  color: #007dff;
  font-weight: bold;
}
.props form {
  display: flex;
  flex-direction: column;
  padding: 6px 18px 0 20px;
}
fieldset {
  margin: 0 0 9px;
  padding: 0;
  border: none;
}
fieldset label {
  display: flex;
  align-items: center;
  gap: 9px;
  height: 32px;
  padding-left: 1px;
  color: #a3a3a3;
}
input[type="radio"] {
  appearance: none;
  width: 14px;
  height: 14px;
  border: 1px solid #dfe1ec;
  border-radius: 50%;
  background-color: #f0f1f8;
}
input[type="radio"]:checked {
  border: 4px solid #dedede;
  background-color: #fff;
}
.prop-row {
  display: flex;
  align-items: center;
  justify-content: space-between;
  height: 24px;
}
.prop-name {
  height: 20px;
  margin-top: 16px;
  margin-bottom: 9px;
  line-height: 20px;
}
.color-btn {
  width: 64px;
  height: 24px;
  padding: 2px;
  border: 1px solid #e8e8e8;
  border-radius: 5px;
}
.color-btn i {
  display: block;
  height: 18px;
  border: 1px solid #e0e0e0;
  border-radius: 4px;
  background-color: #ededed;
}
.props input[type="range"] {
  appearance: none;
  width: 110px;
  height: 14px;
  background: linear-gradient(#e0e0e0, #e0e0e0) center / 100% 6px no-repeat;
  border-radius: 3px;
}
.props input.half {
  background: linear-gradient(90deg, #c9c9c9 50%, #e0e0e0 50%) center / 100% 6px no-repeat;
}
.props input[type="range"]::-webkit-slider-thumb {
  appearance: none;
  width: 14px;
  height: 14px;
  border: 2px solid #c9c9c9;
  border-radius: 50%;
  background-color: #fff;
}
.spin {
  display: flex;
  align-items: center;
  width: 64px;
  height: 24px;
  padding: 0 5px 0 7px;
  border: 1px solid #e2e2e2;
  border-radius: 5px;
  background-color: #ededed;
  font-size: 14px;
}
.spin input {
  flex: 1;
  min-width: 0;
}
.spin svg {
  width: 6px;
  height: 16px;
  fill: #aaa;
  stroke: none;
}

/* status bar */
.status {
  display: flex;
  flex: none;
  align-items: center;
  height: 32px;
  border-bottom: 1px solid #d8d9df;
  background-color: #f3f4fa;
}
.status .vsep {
  height: 24px;
  background-color: #e0e1e8;
}
.outline {
  width: 46px;
  padding-left: 6px;
}
.page-pick, .zoom-pick {
  display: flex;
  align-items: center;
}
.page-pick {
  width: 128px;
  padding: 0 13px 0 16px;
  font-size: 13px;
}
select {
  appearance: none;
  flex: 1;
}
.add {
  width: 40px;
}
.page-tab {
  width: 72px;
  padding-left: 23px;
  font-size: 13px;
  font-weight: bold;
  color: #007dff;
}
.grow {
  flex: 1;
}
.count {
  width: 100px;
  padding-left: 8px;
  white-space: nowrap;
}
.layers {
  width: 48px;
  gap: 4px;
}
.focus-btn {
  display: flex;
  align-items: center;
  gap: 8px;
  width: 60px;
  padding-left: 6px;
  font-size: 13px;
}
.play {
  width: 35px;
}
.zoom {
  appearance: none;
  width: 96px;
  height: 12px;
  background: linear-gradient(90deg, #333 14%, #fff 14%) center / 100% 3px no-repeat;
}
.zoom::-webkit-slider-thumb {
  appearance: none;
  width: 12px;
  height: 12px;
  border: 2px solid #333;
  border-radius: 50%;
  background-color: #fff;
}
.zoom-pick {
  width: 67px;
  padding: 0 12px;
}
.nav-map {
  width: 36px;
  padding-left: 4px;
}
.fit {
  margin-right: 10px;
}
.under {
  flex: none;
  height: 1px;
  background: linear-gradient(90deg, #fff 27%, #333 27%, #333 28%, #f3e4cf 28%, #e8d8c0 39%, #2e1a14 39%, #2e1a14 45%, #c9a870 45%, #c9a870 52%, #86cfe8 52%, #86cfe8 58%, #e4e4e8 58%);
}
```

FILE: script.js
```js
const colors = [
  '#b01020', '#c8082e', '#ee4560', '#f86680', '#fa9ab0',
  '#27808f', '#39a8c0', '#3cc0e0', '#5adaf0', '#a6f0ff',
  '#f0531f', '#ff7f3a', '#ff981c', '#ffb515', '#ffc560',
  '#0f9480', '#18b5a0', '#18cfb4', '#6adccb', '#88ecdc',
  '#9c2860', '#c84a90', '#e868ac', '#fb88cc', '#f2c2dc',
  '#648c14', '#78a02a', '#9cc022', '#b2d048', '#d4e090',
  '#1e28b0', '#3040d8', '#7040f5', '#9070ff', '#ac90fa',
  '#fcc800', '#fade2c', '#f0e82a', '#fcf448', '#fdfc80',
  '#9850dc', '#c050e8', '#d46cff', '#bf84ff', '#dba4ff',
  '#2e8040', '#3aa058', '#4cac74', '#62bc88', '#90d8aa',
  '#e83428', '#ff463a', '#ff6060', '#ff7a78', '#ff9488',
  '#2440a0', '#2c58d0', '#2f68f8', '#6890ff', '#8cb0f8',
  '#742c00', '#983a00', '#b04028', '#d85e40', '#e47858',
  '#1c88d8', '#2898f4', '#40acff', '#3ad0ff', '#68e4ff',
  '#7a4c38', '#965c44', '#b87450', '#d88860', '#f89868',
  '#888078', '#b4ae9c', '#d0cab8', '#e4dcca', '#f4eed8',
  '#181818', '#303030', '#484848', '#5c5c5c', '#7c7c7c',
  '#bababa', '#cacaca', '#dadada', '#e6e6e6', '#f4f4f4', '#ffffff'
];

document.getElementById('swatches').innerHTML =
  colors.map(c => `<i style="background:${c}"></i>`).join('');

// 1000 mm on the sheet takes this many pixels at the current zoom
const STEP = 48.4;

function drawRuler(id, origin, from, to, vertical) {
  let ticks = '';
  let labels = '';
  for (let i = from * 4; i <= to * 4 + 3; i++) {
    const p = Math.round(origin + i * STEP / 4) + 0.5;
    const major = i % 4 === 0;
    if (vertical) {
      ticks += `M${major ? 0 : 10} ${p}H17`;
      if (major) labels += `<text text-anchor="end" transform="translate(11 ${p + 2}) rotate(-90)">${i * 250}</text>`;
    } else {
      ticks += `M${p} ${major ? 0 : 10}V17`;
      if (major) labels += `<text x="${p + 1}" y="12">${i * 250}</text>`;
    }
  }
  document.getElementById(id).innerHTML = `<path d="${ticks}"/>${labels}`;
}

drawRuler('rulerH', 90, -2, 15, false);
drawRuler('rulerV', 31, 0, 11, true);
```
